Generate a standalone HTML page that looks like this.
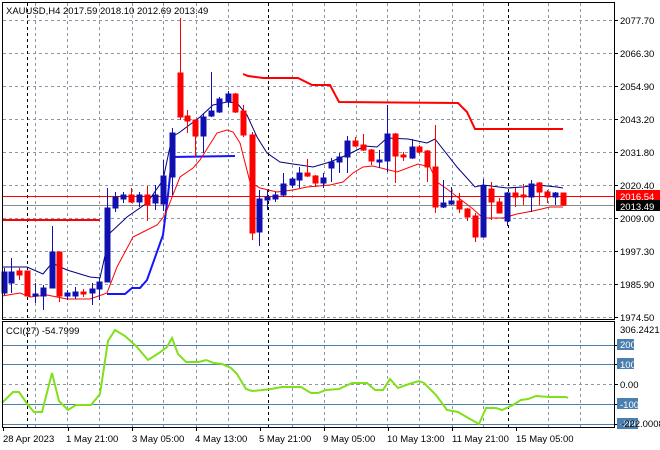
<!DOCTYPE html>
<html><head><meta charset="utf-8"><style>
html,body{margin:0;padding:0;background:#fff;}
svg{display:block;font-family:"Liberation Sans",sans-serif;}
</style></head><body>
<svg width="660" height="450" viewBox="0 0 660 450" xmlns="http://www.w3.org/2000/svg">
<rect width="660" height="450" fill="#fff"/>
<g stroke="#8a96a3" stroke-width="1" stroke-dasharray="3,3" fill="none">
<line x1="3" y1="20.5" x2="614" y2="20.5"/><line x1="3" y1="53.5" x2="614" y2="53.5"/><line x1="3" y1="86.5" x2="614" y2="86.5"/><line x1="3" y1="119.5" x2="614" y2="119.5"/><line x1="3" y1="152.5" x2="614" y2="152.5"/><line x1="3" y1="185.5" x2="614" y2="185.5"/><line x1="3" y1="218.5" x2="614" y2="218.5"/><line x1="3" y1="251.5" x2="614" y2="251.5"/><line x1="3" y1="284.5" x2="614" y2="284.5"/><line x1="3" y1="317.5" x2="614" y2="317.5"/>
<line x1="3" y1="384.5" x2="614" y2="384.5"/>
<path d="M35.5 3V319M67.5 3V319M99.5 3V319M132.5 3V319M163.5 3V319M196.5 3V319M228.5 3V319M292.5 3V319M324.5 3V319M356.5 3V319M387.5 3V319M419.5 3V319M452.5 3V319M483.5 3V319M548.5 3V319M580.5 3V319"/>
<path d="M35.5 322V427M67.5 322V427M99.5 322V427M132.5 322V427M163.5 322V427M196.5 322V427M228.5 322V427M292.5 322V427M324.5 322V427M356.5 322V427M387.5 322V427M419.5 322V427M452.5 322V427M483.5 322V427M548.5 322V427M580.5 322V427"/>
</g>
<g stroke="#000" stroke-width="1" stroke-dasharray="3,3">
<path d="M27.5 3V319M268.5 3V319M508.5 3V319M27.5 322V427M268.5 322V427M508.5 322V427"/>
</g>
<g stroke="#4a7fb0" stroke-width="1">
<line x1="3" y1="345.5" x2="614" y2="345.5"/><line x1="3" y1="364.5" x2="614" y2="364.5"/><line x1="3" y1="404.5" x2="614" y2="404.5"/><line x1="3" y1="424.5" x2="614" y2="424.5"/>
</g>
<line x1="3" y1="196.5" x2="614" y2="196.5" stroke="#ff0000"/>
<line x1="3" y1="205.5" x2="614" y2="205.5" stroke="#8c8c8c"/>
<polyline fill="none" stroke="#ff0000" stroke-width="2" points="3,220 100,220"/>
<polyline fill="none" stroke="#ff0000" stroke-width="2" points="243,74 248,76 263,78 298,78 312,85 330,85 339,102 458,103 467,112 475,129 563,129"/>
<polyline fill="none" stroke="#1414ff" stroke-width="2" points="107,294 125,294 132,288 140,288 147,280 163,235 168,195 172,157 235,156"/>
<polyline fill="none" stroke="#000080" stroke-width="1" points="2,267 10,267 27,267 43,274 52,263 67,270 90,277 100,278 110,233 127,217 147,203 163,180 172,137 180,132 200,117 213,105 227,102 237,103 247,115 257,137 267,153 280,162 293,164 300,165 313,167 330,162 347,155 365,146 377,147 387,138 408,139 427,143 435,139 457,167 475,187 483,185 507,188 523,187 537,185 557,187 563,188"/>
<polyline fill="none" stroke="#ff0000" stroke-width="1" points="2,296 20,293 30,297 47,295 67,299 90,299 107,293 117,267 133,237 143,232 157,225 165,215 180,177 193,168 200,160 217,133 227,130 233,132 240,143 250,182 260,188 277,192 293,190 307,187 330,185 343,182 353,173 363,167 373,166 397,172 418,164 430,167 437,182 447,189 473,209 483,218 503,218 517,214 533,211 550,207 563,207"/>
<g stroke-width="1">
<g stroke="#1010b0" fill="#1010b0">
<line x1="4.5" y1="268" x2="4.5" y2="295"/><rect x="2" y="272" width="5" height="21"/>
<line x1="11.5" y1="258" x2="11.5" y2="293"/><rect x="9" y="272" width="5" height="11"/>
<line x1="35.5" y1="283" x2="35.5" y2="303"/><rect x="33" y="294" width="5" height="2"/>
<line x1="43.5" y1="285" x2="43.5" y2="310"/><rect x="41" y="288" width="5" height="8"/>
<line x1="52.5" y1="226" x2="52.5" y2="288"/><rect x="50" y="252" width="5" height="36"/>
<line x1="67.5" y1="290" x2="67.5" y2="300"/><rect x="65" y="293" width="5" height="3"/>
<line x1="75.5" y1="287" x2="75.5" y2="299"/><rect x="73" y="292" width="5" height="4"/>
<line x1="92.5" y1="283" x2="92.5" y2="305"/><rect x="90" y="289" width="5" height="4"/>
<line x1="99.5" y1="277" x2="99.5" y2="300"/><rect x="97" y="282" width="5" height="7"/>
<line x1="107.5" y1="188" x2="107.5" y2="282"/><rect x="105" y="208" width="5" height="74"/>
<line x1="115.5" y1="192" x2="115.5" y2="212"/><rect x="113" y="197" width="5" height="11"/>
<line x1="123.5" y1="192" x2="123.5" y2="203"/><rect x="121" y="195" width="5" height="4"/>
<line x1="139.5" y1="192" x2="139.5" y2="207"/><rect x="137" y="195" width="5" height="7"/>
<line x1="155.5" y1="185" x2="155.5" y2="210"/><rect x="153" y="195" width="5" height="8"/>
<line x1="163.5" y1="160" x2="163.5" y2="211"/><rect x="161" y="176" width="5" height="28"/>
<line x1="172.5" y1="128" x2="172.5" y2="195"/><rect x="170" y="133" width="5" height="44"/>
<line x1="203.5" y1="113" x2="203.5" y2="153"/><rect x="201" y="117" width="5" height="19"/>
<line x1="211.5" y1="72" x2="211.5" y2="117"/><rect x="209" y="111" width="5" height="5"/>
<line x1="219.5" y1="97" x2="219.5" y2="113"/><rect x="217" y="99" width="5" height="13"/>
<line x1="228.5" y1="91" x2="228.5" y2="107"/><rect x="226" y="94" width="5" height="8"/>
<line x1="259.5" y1="190" x2="259.5" y2="246"/><rect x="257" y="199" width="5" height="33"/>
<line x1="267.5" y1="190" x2="267.5" y2="210"/><rect x="265" y="197" width="5" height="3"/>
<line x1="275.5" y1="192" x2="275.5" y2="202"/><rect x="273" y="195" width="5" height="4"/>
<line x1="283.5" y1="173" x2="283.5" y2="197"/><rect x="281" y="184" width="5" height="11"/>
<line x1="292.5" y1="177" x2="292.5" y2="188"/><rect x="290" y="179" width="5" height="6"/>
<line x1="299.5" y1="167" x2="299.5" y2="188"/><rect x="297" y="173" width="5" height="7"/>
<line x1="323.5" y1="173" x2="323.5" y2="188"/><rect x="321" y="178" width="5" height="5"/>
<line x1="331.5" y1="158" x2="331.5" y2="182"/><rect x="329" y="162" width="5" height="6"/>
<line x1="339.5" y1="153" x2="339.5" y2="173"/><rect x="337" y="157" width="5" height="5"/>
<line x1="347.5" y1="136" x2="347.5" y2="173"/><rect x="345" y="141" width="5" height="16"/>
<line x1="379.5" y1="150" x2="379.5" y2="168"/><rect x="377" y="160" width="5" height="2"/>
<line x1="387.5" y1="105" x2="387.5" y2="172"/><rect x="385" y="134" width="5" height="27"/>
<line x1="412.5" y1="139" x2="412.5" y2="159"/><rect x="410" y="147" width="5" height="11"/>
<line x1="443.5" y1="180" x2="443.5" y2="208"/><rect x="441" y="203" width="5" height="4"/>
<line x1="451.5" y1="187" x2="451.5" y2="205"/><rect x="449" y="201" width="5" height="3"/>
<line x1="483.5" y1="179" x2="483.5" y2="237"/><rect x="481" y="186" width="5" height="51"/>
<line x1="507.5" y1="192" x2="507.5" y2="226"/><rect x="505" y="193" width="5" height="28"/>
<line x1="531.5" y1="180" x2="531.5" y2="212"/><rect x="529" y="184" width="5" height="13"/>
<line x1="555.5" y1="192" x2="555.5" y2="205"/><rect x="553" y="193" width="5" height="4"/>
</g>
<g stroke="#ff0000" fill="#ff0000">
<line x1="19.5" y1="268" x2="19.5" y2="280"/><rect x="17" y="271" width="5" height="4"/>
<line x1="27.5" y1="271" x2="27.5" y2="296"/><rect x="25" y="271" width="5" height="25"/>
<line x1="59.5" y1="252" x2="59.5" y2="302"/><rect x="57" y="252" width="5" height="44"/>
<line x1="83.5" y1="289" x2="83.5" y2="297"/><rect x="81" y="292" width="5" height="2"/>
<line x1="131.5" y1="188" x2="131.5" y2="203"/><rect x="129" y="195" width="5" height="7"/>
<line x1="147.5" y1="186" x2="147.5" y2="221"/><rect x="145" y="195" width="5" height="10"/>
<line x1="180.5" y1="18" x2="180.5" y2="120"/><rect x="178" y="73" width="5" height="44"/>
<line x1="187.5" y1="110" x2="187.5" y2="133"/><rect x="185" y="116" width="5" height="5"/>
<line x1="195.5" y1="120" x2="195.5" y2="157"/><rect x="193" y="120" width="5" height="16"/>
<line x1="235.5" y1="93" x2="235.5" y2="113"/><rect x="233" y="94" width="5" height="18"/>
<line x1="243.5" y1="105" x2="243.5" y2="137"/><rect x="241" y="111" width="5" height="24"/>
<line x1="252.5" y1="132" x2="252.5" y2="240"/><rect x="250" y="135" width="5" height="98"/>
<line x1="307.5" y1="159" x2="307.5" y2="177"/><rect x="305" y="173" width="5" height="3"/>
<line x1="315.5" y1="175" x2="315.5" y2="187"/><rect x="313" y="176" width="5" height="7"/>
<line x1="355.5" y1="137" x2="355.5" y2="147"/><rect x="353" y="141" width="5" height="5"/>
<line x1="363.5" y1="134" x2="363.5" y2="151"/><rect x="361" y="145" width="5" height="5"/>
<line x1="371.5" y1="149" x2="371.5" y2="165"/><rect x="369" y="150" width="5" height="11"/>
<line x1="395.5" y1="133" x2="395.5" y2="183"/><rect x="393" y="134" width="5" height="22"/>
<line x1="403.5" y1="152" x2="403.5" y2="161"/><rect x="401" y="155" width="5" height="2"/>
<line x1="419.5" y1="145" x2="419.5" y2="154"/><rect x="417" y="147" width="5" height="5"/>
<line x1="427.5" y1="150" x2="427.5" y2="182"/><rect x="425" y="151" width="5" height="16"/>
<line x1="435.5" y1="125" x2="435.5" y2="213"/><rect x="433" y="167" width="5" height="40"/>
<line x1="459.5" y1="193" x2="459.5" y2="213"/><rect x="457" y="201" width="5" height="8"/>
<line x1="467.5" y1="208" x2="467.5" y2="221"/><rect x="465" y="209" width="5" height="8"/>
<line x1="475.5" y1="213" x2="475.5" y2="242"/><rect x="473" y="216" width="5" height="21"/>
<line x1="491.5" y1="182" x2="491.5" y2="220"/><rect x="489" y="189" width="5" height="13"/>
<line x1="499.5" y1="198" x2="499.5" y2="213"/><rect x="497" y="202" width="5" height="11"/>
<line x1="515.5" y1="188" x2="515.5" y2="207"/><rect x="513" y="193" width="5" height="4"/>
<line x1="523.5" y1="184" x2="523.5" y2="205"/><rect x="521" y="195" width="5" height="2"/>
<line x1="539.5" y1="182" x2="539.5" y2="205"/><rect x="537" y="183" width="5" height="9"/>
<line x1="547.5" y1="190" x2="547.5" y2="203"/><rect x="545" y="192" width="5" height="5"/>
<line x1="563.5" y1="193" x2="563.5" y2="206"/><rect x="561" y="193" width="5" height="12"/>
</g>
</g>
<polyline fill="none" stroke="#80e01a" stroke-width="2" points="2,403 13,392 19,392 28,405 34,412 42,412 52,373 59,401 68,410 76,405 91,405 100,394 108,341 115,330 125,336 136,346 148,360 159,353 167,347 172,338 178,354 186,362 199,362 206,360 214,363 222,364 231,368 237,374 246,389 252,391 263,390 271,389 282,387 301,387 311,393 318,393 326,390 339,389 352,383 360,383 367,383 375,390 383,390 390,379 398,388 409,384 419,381 424,383 436,395 447,410 458,412 470,419 479,424 486,408 496,408 502,410 513,405 521,400 528,399 536,396 549,397 566,397 568,398"/>
<rect x="2.5" y="2.5" width="612" height="317" fill="none" stroke="#000"/>
<rect x="2.5" y="321.5" width="612" height="106" fill="none" stroke="#000"/>
<g stroke="#000"><path d="M615 20.5h3M615 53.5h3M615 86.5h3M615 119.5h3M615 152.5h3M615 185.5h3M615 218.5h3M615 251.5h3M615 284.5h3M615 317.5h3M615 345.5h3M615 364.5h3M615 384.5h3M615 404.5h3M615 424.5h3"/>
<path d="M3.5 428v3M68.5 428v3M132.5 428v3M196.5 428v3M260.5 428v3M324.5 428v3M388.5 428v3M452.5 428v3M516.5 428v3"/></g>
<g font-size="9.5" fill="#000">
<text x="620" y="24">2077.70</text><text x="620" y="57">2066.30</text><text x="620" y="90">2054.90</text><text x="620" y="123">2043.20</text><text x="620" y="156">2031.80</text><text x="620" y="189">2020.40</text><text x="620" y="222">2009.00</text><text x="620" y="255">1997.30</text><text x="620" y="288">1985.90</text><text x="620" y="321">1974.50</text>
</g>
<rect x="616" y="190" width="44" height="11" fill="#ff0000"/>
<text x="620" y="200" font-size="9.5" fill="#fff">2016.54</text>
<rect x="616" y="200" width="44" height="11" fill="#000"/>
<text x="620" y="210" font-size="9.5" fill="#fff">2013.49</text>
<g font-size="9.5">
<text x="620" y="333" fill="#000">306.2421</text>
<rect x="617" y="339" width="17" height="11" fill="#4a7fb0"/><text x="620" y="348" fill="#fff">200</text>
<rect x="617" y="358" width="17" height="11" fill="#4a7fb0"/><text x="620" y="368" fill="#fff">100</text>
<text x="620" y="388" fill="#000">0.00</text>
<rect x="617" y="398" width="21" height="11" fill="#4a7fb0"/><text x="620" y="408" fill="#fff">-100</text>
<rect x="617" y="418" width="21" height="11" fill="#4a7fb0"/><text x="620" y="427" fill="#fff">-200</text>
<text x="621" y="427" fill="#000">-222.0008</text>
</g>
<g font-size="9.5" fill="#000">
<text x="6" y="14">XAUUSD,H4  2017.59 2018.10 2012.69 2013.49</text>
<text x="6" y="334">CCI(27) -54.7999</text>
<text x="3" y="442">28 Apr 2023</text><text x="66" y="442">1 May 21:00</text><text x="132" y="442">3 May 05:00</text><text x="195" y="442">4 May 13:00</text><text x="259" y="442">5 May 21:00</text><text x="323" y="442">9 May 05:00</text><text x="387" y="442">10 May 13:00</text><text x="452" y="442">11 May 21:00</text><text x="516" y="442">15 May 05:00</text>
</g>
</svg>
</body></html>
